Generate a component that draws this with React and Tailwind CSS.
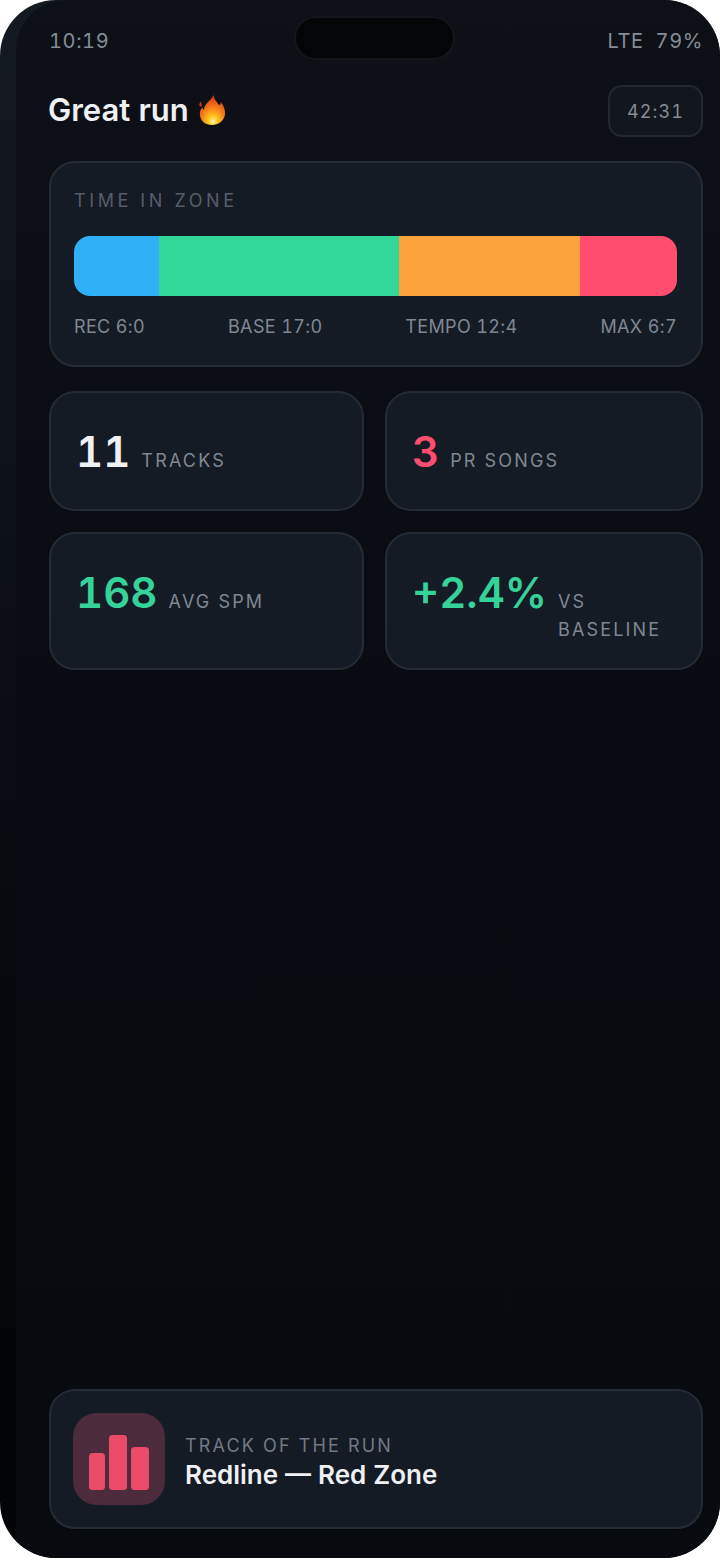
const zones = [
  { label: "REC 6:0" },
  { label: "BASE 17:0" },
  { label: "TEMPO 12:4" },
  { label: "MAX 6:7" },
];

function Flame() {
  return (
    <svg viewBox="0 0 30 34" className="h-[32px] w-[28px] shrink-0">
      <defs>
        <radialGradient id="flameFill" cx="52%" cy="88%" r="80%">
          <stop offset="0%" stopColor="#fff6b0" />
          <stop offset="22%" stopColor="#ffc81f" />
          <stop offset="55%" stopColor="#f8821a" />
          <stop offset="100%" stopColor="#d93a17" />
        </radialGradient>
      </defs>
      <path
        d="M17 1c0 5 3 7 6 11 1-1 1.500-2 1.500-3.500C27 12 29 15.500 29 20c0 8-6 13-14 13S2 28 2 21c0-3 1-5 2.500-7 .5 1.500 1 2.500 2 3C6 11 13 8 17 1z"
        fill="url(#flameFill)"
      />
      <path d="M3 8c.5 2 1.500 3 1 5-1 .5-2 .5-2.500-.5C1 11 2 9.500 3 8z" fill="#c9381a" />
    </svg>
  );
}

function Stat({ value, label, color }) {
  return (
    <div className="flex items-baseline gap-[11px] rounded-[26px] border-2 border-[#252b35] bg-[#151b24] px-[25px] pt-[27px] pb-[25px]">
      <span className={`text-[42px] leading-[64px] font-semibold ${color}`}>{value}</span>
      <span className="text-[18px] leading-[28px] tracking-[0.12em] text-[#7f8793]">{label}</span>
    </div>
  );
}

export default function App() {
  return (
    <div className="relative h-[1558px] w-[720px] overflow-hidden rounded-[56px] bg-gradient-to-b from-[#141a22] via-[#090c12] to-[#020305] font-[Inter,sans-serif] tabular-nums">
      <div className="ml-4 flex h-full flex-col rounded-tl-[50px] bg-gradient-to-b from-[#0d1117] via-[#080b11] to-[#070a0f] pr-[17px] pb-[29px] pl-[33px]">
        <div className="flex justify-between pt-[28px] text-[20px] leading-[26px] tracking-[0.03em] text-[#868c96]">
          <span>10:19</span>
          <span className="whitespace-pre">LTE  79%</span>
        </div>

        <div className="mt-[31px] flex items-center justify-between">
          <div className="flex items-center gap-[9px] pb-[2px]">
            <h1 className="-ml-px text-[31px] leading-[40px] font-semibold text-[#eef0f4]">Great run</h1>
            <Flame />
          </div>
          <div className="flex h-[52px] w-[95px] items-center justify-center rounded-[14px] border-2 border-[#232934] bg-[#12161d] text-[18px] tracking-[0.06em] text-[#868c96]">
            42:31
          </div>
        </div>

        <div className="mt-[24px] rounded-[26px] border-2 border-[#252b35] bg-[#151b24] pt-[26px] pr-[24px] pb-[26px] pl-[23px]">
          <div className="text-[18px] leading-[24px] tracking-[0.2em] text-[#565d69]">TIME IN ZONE</div>
          <div className="mt-[23px] flex h-[60px] overflow-hidden rounded-[16px]">
            <div className="w-[85px] bg-[#2fb0f7]" />
            <div className="w-[240px] bg-[#32d89a]" />
            <div className="w-[181px] bg-[#fba23c]" />
            <div className="flex-1 bg-[#ff4d70]" />
          </div>
          <div className="mt-[19px] flex justify-between text-[18px] leading-[24px] tracking-[0.02em] text-[#7f8793]">
            {zones.map((z) => (
              <span key={z.label}>{z.label}</span>
            ))}
          </div>
        </div>

        <div className="mt-[24px] grid grid-cols-[315px_318px] grid-rows-[120px_138px] gap-[21px]">
          <Stat value="11" label="TRACKS" color="text-[#eef0f4]" />
          <Stat value="3" label="PR SONGS" color="text-[#ff4d70]" />
          <Stat value="168" label="AVG SPM" color="text-[#35d29a]" />
          <Stat value="+2.4%" label="VS BASELINE" color="text-[#35d29a]" />
        </div>

        <div className="mt-auto flex h-[140px] items-center gap-[20px] rounded-[26px] border-2 border-[#252b35] bg-[#151b24] px-[22px]">
          <div className="flex h-[92px] w-[92px] shrink-0 items-center justify-center rounded-[24px] bg-[#4c2b3d] pt-[7px]">
            <svg viewBox="0 0 60 55" className="h-[55px] w-[60px]">
              <rect x="0" y="18" width="16" height="37" rx="3.500" fill="#ec4a69" />
              <rect x="20" y="0" width="18" height="55" rx="3.500" fill="#ec4a69" />
              <rect x="42" y="12" width="18" height="43" rx="3.500" fill="#ec4a69" />
            </svg>
          </div>
          <div className="flex flex-col pt-[6px]">
            <span className="text-[18px] leading-[24px] tracking-[0.12em] text-[#727985]">TRACK OF THE RUN</span>
            <span className="mt-px text-[26px] leading-[32px] font-semibold text-[#eef0f4]">Redline — Red Zone</span>
          </div>
        </div>
      </div>

      <div className="absolute top-[16px] left-[294px] h-[44px] w-[161px] rounded-[22px] border-2 border-[#13161c] bg-[#040507]" />
    </div>
  );
}
